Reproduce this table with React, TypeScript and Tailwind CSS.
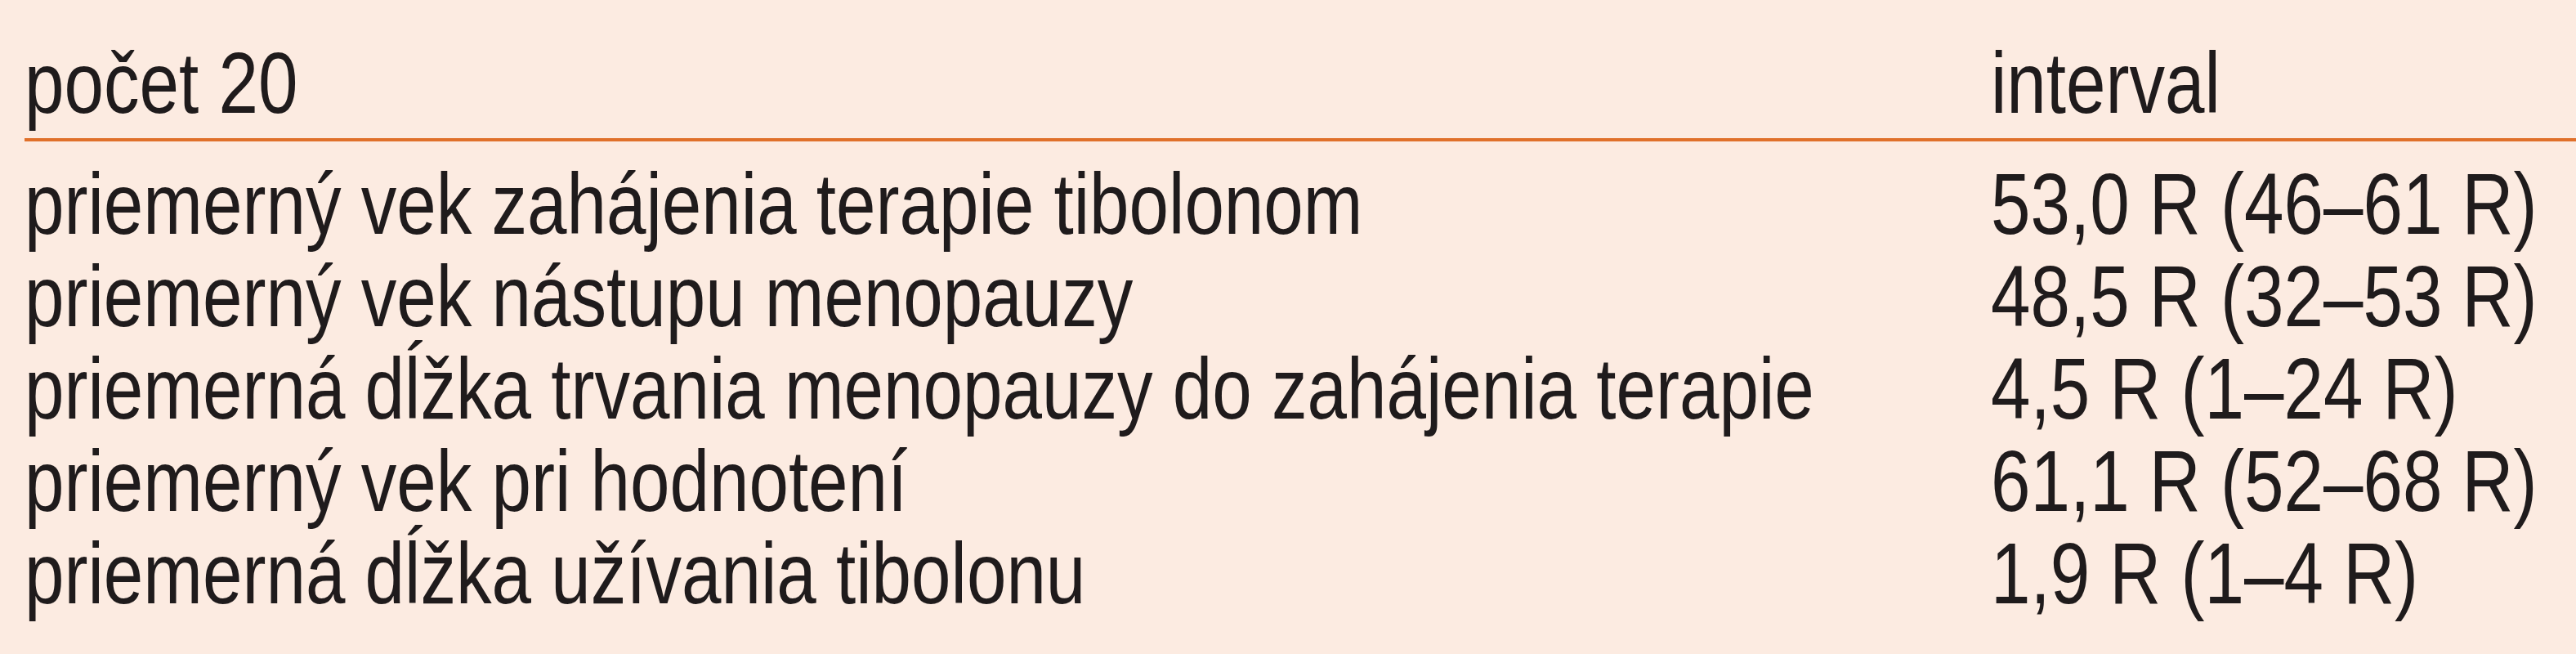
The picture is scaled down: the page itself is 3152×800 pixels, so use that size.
const rows: [string, string][] = [
  ['priemerný vek zahájenia terapie tibolonom', '53,0 R (46–61 R)'],
  ['priemerný vek nástupu menopauzy', '48,5 R (32–53 R)'],
  ['priemerná dĺžka trvania menopauzy do zahájenia terapie', '4,5 R (1–24 R)'],
  ['priemerný vek pri hodnotení', '61,1 R (52–68 R)'],
  ['priemerná dĺžka užívania tibolonu', '1,9 R (1–4 R)'],
];

// narrow look of the original typeface: Liberation Sans squeezed horizontally
const cell = 'whitespace-nowrap origin-left scale-x-[0.83]';

export default function App() {
  return (
    <div className="w-full h-[800px] bg-[#fcebe1] pt-[45px] pl-[30px] text-[#1f1b1c] font-['Liberation_Sans',Arial,sans-serif] text-[105px] leading-[113px]">
      {/* header */}
      <div className="grid grid-cols-[2406px_1fr] pb-[11px] border-b-[4px] border-[#e0702a]">
        <div className={cell}>počet 20</div>
        <div className={cell}>interval</div>
      </div>

      {/* data rows */}
      <div className="mt-[20px]">
        {rows.map(([label, value]) => (
          <div key={label} className="grid grid-cols-[2406px_1fr]">
            <div className={cell}>{label}</div>
            <div className={cell}>{value}</div>
          </div>
        ))}
      </div>
    </div>
  );
}
